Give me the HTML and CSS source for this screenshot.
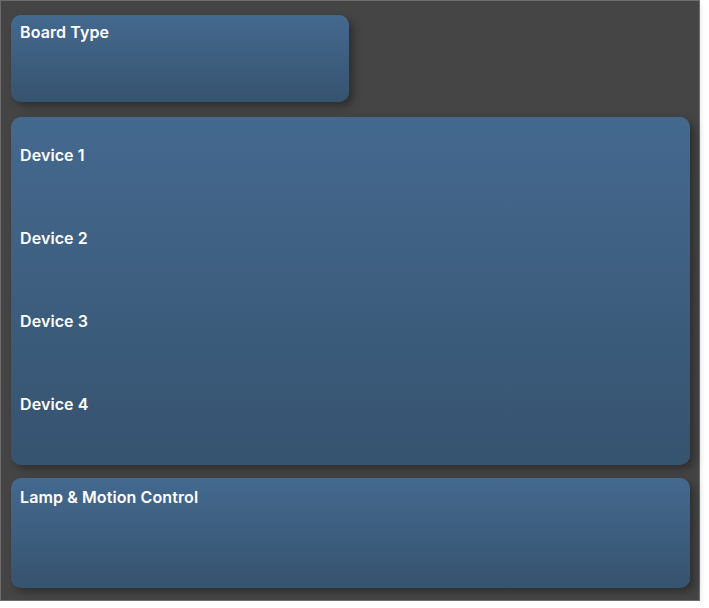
FILE: index.html
```html
<!DOCTYPE html>
<html>
<head>
<meta charset="utf-8">
<link rel="stylesheet" href="styles.css">
</head>
<body>
<div class="frame">
  <section class="card board">
    <h2 class="title">Board Type</h2>
  </section>
  <section class="card devices">
    <div class="device"><h2 class="title">Device 1</h2></div>
    <div class="device"><h2 class="title">Device 2</h2></div>
    <div class="device"><h2 class="title">Device 3</h2></div>
    <div class="device"><h2 class="title">Device 4</h2></div>
  </section>
  <section class="card lamp">
    <h2 class="title">Lamp &amp; Motion Control</h2>
  </section>
</div>
</body>
</html>
```
FILE: styles.css
```css
html, body {
  margin: 0;
  padding: 0;
  background: #ffffff;
}
body {
  font-family: Inter, "Noto Sans", sans-serif;
}
.frame {
  box-sizing: border-box;
  width: 700px;
  height: 601px;
  background: #454545;
  border: 1px solid #6c6c6c;
  padding: 14px 9px 0 10px;
  display: flex;
  flex-direction: column;
  box-shadow: 0 3px 6px rgba(0,0,0,0.12);
}
.card {
  box-sizing: border-box;
  border-radius: 10px;
  background: linear-gradient(180deg, #44698f 0%, #36536f 100%);
  box-shadow: 4px 4px 8px rgba(0,0,0,0.35);
  color: #ffffff;
}
.title {
  margin: 0;
  font-size: 16px;
  font-weight: 600;
  line-height: 20px;
  letter-spacing: 0.1px;
}
.board {
  width: 338px;
  height: 87px;
  padding: 7px 9px;
}
.devices {
  margin-top: 15px;
  height: 348px;
  padding: 0 9px;
}
.device {
  height: 83px;
  padding-top: 28px;
  box-sizing: border-box;
}
.lamp {
  margin-top: 13px;
  height: 110px;
  padding: 9px 9px;
}
```
